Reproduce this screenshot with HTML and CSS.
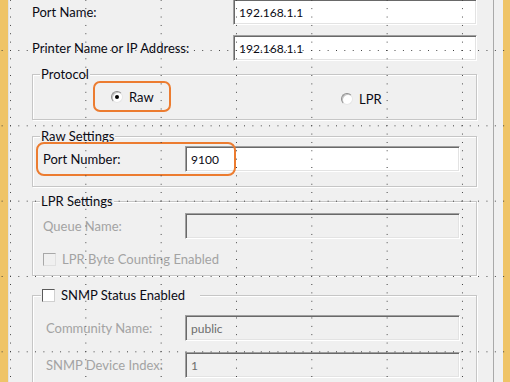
FILE: index.html
```html
<!DOCTYPE html>
<html lang="en">
<head>
    <meta charset="UTF-8">
    <meta name="viewport" content="width=device-width, initial-scale=1.0">
    <title>Add Printer Port</title>
    <link rel="stylesheet" href="styles.css">
</head>
<body>
    <div class="edge-left"></div>

    <div class="designer">
        <div class="form">
            <div class="field-row first">
                <span class="label">Port Name:</span>
                <div class="textbox wide">192.168.1.1</div>
            </div>
            <div class="field-row">
                <span class="label">Printer Name or IP Address:</span>
                <div class="textbox wide">192.168.1.1</div>
            </div>

            <!-- Protocol -->
            <div class="group protocol">
                <div class="group-title">Protocol</div>
                <div class="radio-row">
                    <span class="highlight-raw">
                        <span class="option"><span class="radio checked"></span>Raw</span>
                    </span>
                    <span class="option lpr"><span class="radio"></span>LPR</span>
                </div>
            </div>

            <!-- Raw Settings -->
            <div class="group raw">
                <div class="group-title">Raw Settings</div>
                <div class="group-row">
                    <span class="label">Port Number:</span>
                    <div class="textbox">9100</div>
                </div>
                <div class="highlight-port"></div>
            </div>

            <!-- LPR Settings (disabled) -->
            <div class="group lpr-settings">
                <div class="group-title">LPR Settings</div>
                <div class="group-row">
                    <span class="label disabled">Queue Name:</span>
                    <div class="textbox off"></div>
                </div>
                <div class="check-row disabled">
                    <span class="checkbox off"></span>LPR Byte Counting Enabled
                </div>
            </div>

            <!-- SNMP -->
            <div class="group snmp">
                <div class="group-title check-title">
                    <span class="checkbox"></span>SNMP Status Enabled
                </div>
                <div class="group-row indent">
                    <span class="label disabled">Community Name:</span>
                    <div class="textbox off">public</div>
                </div>
                <div class="group-row indent second">
                    <span class="label disabled">SNMP Device Index:</span>
                    <div class="textbox off">1</div>
                </div>
            </div>
        </div>
    </div>

    <div class="edge-panel"></div>
    <div class="edge-right"></div>

    <!-- designer grid, drawn over everything -->
    <div class="grid"></div>
</body>
</html>
```

FILE: styles.css
```css
body {
    margin: 0;
    height: 382px;
    overflow: hidden;
    display: flex;
    background-color: #f0f0f0;
    font-family: Lato, "Noto Sans", sans-serif;
    font-size: 13px;
    color: #0a0a14;
}

.edge-left {
    width: 8px;
    flex: none;
    background-color: #efc467;
    border-right: 1px solid #e3e3e3;
}

.designer {
    width: 461px;
    flex: none;
    padding-left: 23px;
}

.edge-panel {
    width: 9px;
    flex: none;
    border-left: 1px solid #a9a9a9;
}

.edge-right {
    flex: 1;
    background-color: #efc467;
}

.form {
    width: 445px;
}

.field-row {
    display: flex;
    align-items: center;
    justify-content: space-between;
    margin-top: 10px;
}

.field-row.first {
    margin-top: -1px;
}

/* text boxes */
.textbox {
    box-sizing: border-box;
    height: 26px;
    width: 275px;
    padding-left: 5px;
    display: flex;
    align-items: center;
    font-size: 12px;
    background-color: #fff;
    border-top: 1px solid #a0a0a0;
    border-left: 1px solid #a0a0a0;
    border-right: 1px solid #fff;
    border-bottom: 1px solid #fff;
    box-shadow: inset 1px 1px 0 #696969, inset -1px -1px 0 #e3e3e3;
}

.textbox.wide {
    width: 244px;
}

.textbox.off {
    background-color: #f0f0f0;
    color: #6d6d6d;
}

.disabled {
    color: #a3a3a3;
}

/* group boxes */
.group {
    position: relative;
    box-sizing: border-box;
    border: 1px solid #c6c6c6;
    box-shadow: 1px 1px 0 #fff, inset 1px 1px 0 #fff;
}

.group-title {
    width: fit-content;
    height: 16px;
    line-height: 16px;
    margin: -9px 0 0 7px;
    padding: 0 1px;
    background-color: #f0f0f0;
}

.protocol {
    margin-top: 13px;
    height: 46px;
}

.radio-row {
    display: flex;
    align-items: center;
    margin-top: -1px;
}

.highlight-raw {
    box-sizing: border-box;
    width: 78px;
    height: 31px;
    margin-left: 60px;
    padding-left: 16px;
    display: flex;
    align-items: center;
    border: 2px solid #ec7c30;
    border-radius: 7px;
}

.option {
    display: flex;
    align-items: center;
    gap: 6px;
}

.option.lpr {
    margin-left: 170px;
    margin-top: 5px;
}

.radio {
    box-sizing: border-box;
    width: 12px;
    height: 12px;
    border-radius: 50%;
    background-color: #fff;
    border: 1px solid;
    border-color: #8d8d8d #e6e6e6 #e6e6e6 #8d8d8d;
    box-shadow: inset 1px 1px 0 #c4c4c4;
    display: flex;
    align-items: center;
    justify-content: center;
}

.radio.checked::after {
    content: "";
    width: 4px;
    height: 4px;
    border-radius: 50%;
    background-color: #000;
}

.raw {
    margin-top: 16px;
    height: 51px;
}

.group-row {
    display: flex;
    align-items: center;
    justify-content: space-between;
    padding: 0 16px 0 10px;
    margin-top: 2px;
}

.group-row.indent {
    padding-left: 13px;
}

.group-row.second {
    margin-top: 11px;
}

.highlight-port {
    position: absolute;
    left: 3px;
    top: 5px;
    width: 200px;
    height: 34px;
    box-sizing: border-box;
    border: 2px solid #ec7c30;
    border-radius: 8px;
}

.lpr-settings {
    margin-top: 14px;
    height: 75px;
}

.lpr-settings .group-row {
    margin-top: 4px;
}

.check-row {
    display: flex;
    align-items: center;
    gap: 6px;
    height: 16px;
    margin: 12px 0 0 10px;
}

.checkbox {
    box-sizing: border-box;
    width: 13px;
    height: 13px;
    flex: none;
    background-color: #fff;
    border: 1px solid;
    border-color: #5a5a5a #d0d0d0 #d0d0d0 #5a5a5a;
}

.checkbox.off {
    background-color: #f0f0f0;
    border-color: #a8a8a8 #e0e0e0 #e0e0e0 #a8a8a8;
}

.snmp {
    margin-top: 19px;
    height: 88px;
}

.check-title {
    display: flex;
    align-items: center;
    gap: 6px;
    width: 159px;
    box-sizing: border-box;
    margin-left: 8px;
    padding-left: 1px;
}

.snmp .group-row {
    margin-top: 12px;
}

.snmp .group-row.second {
    margin-top: 11px;
}

/* designer grid overlay */
.grid {
    position: fixed;
    inset: 0;
    pointer-events: none;
    background-image:
        conic-gradient(at 1px 1px, transparent 75%, #3a3a3a 0),
        conic-gradient(at 1px 1px, transparent 75%, #3a3a3a 0);
    background-size: 75.33px 8.37px, 8.37px 75.33px;
    background-position: 10px 50px, 10px 50px;
}
```
